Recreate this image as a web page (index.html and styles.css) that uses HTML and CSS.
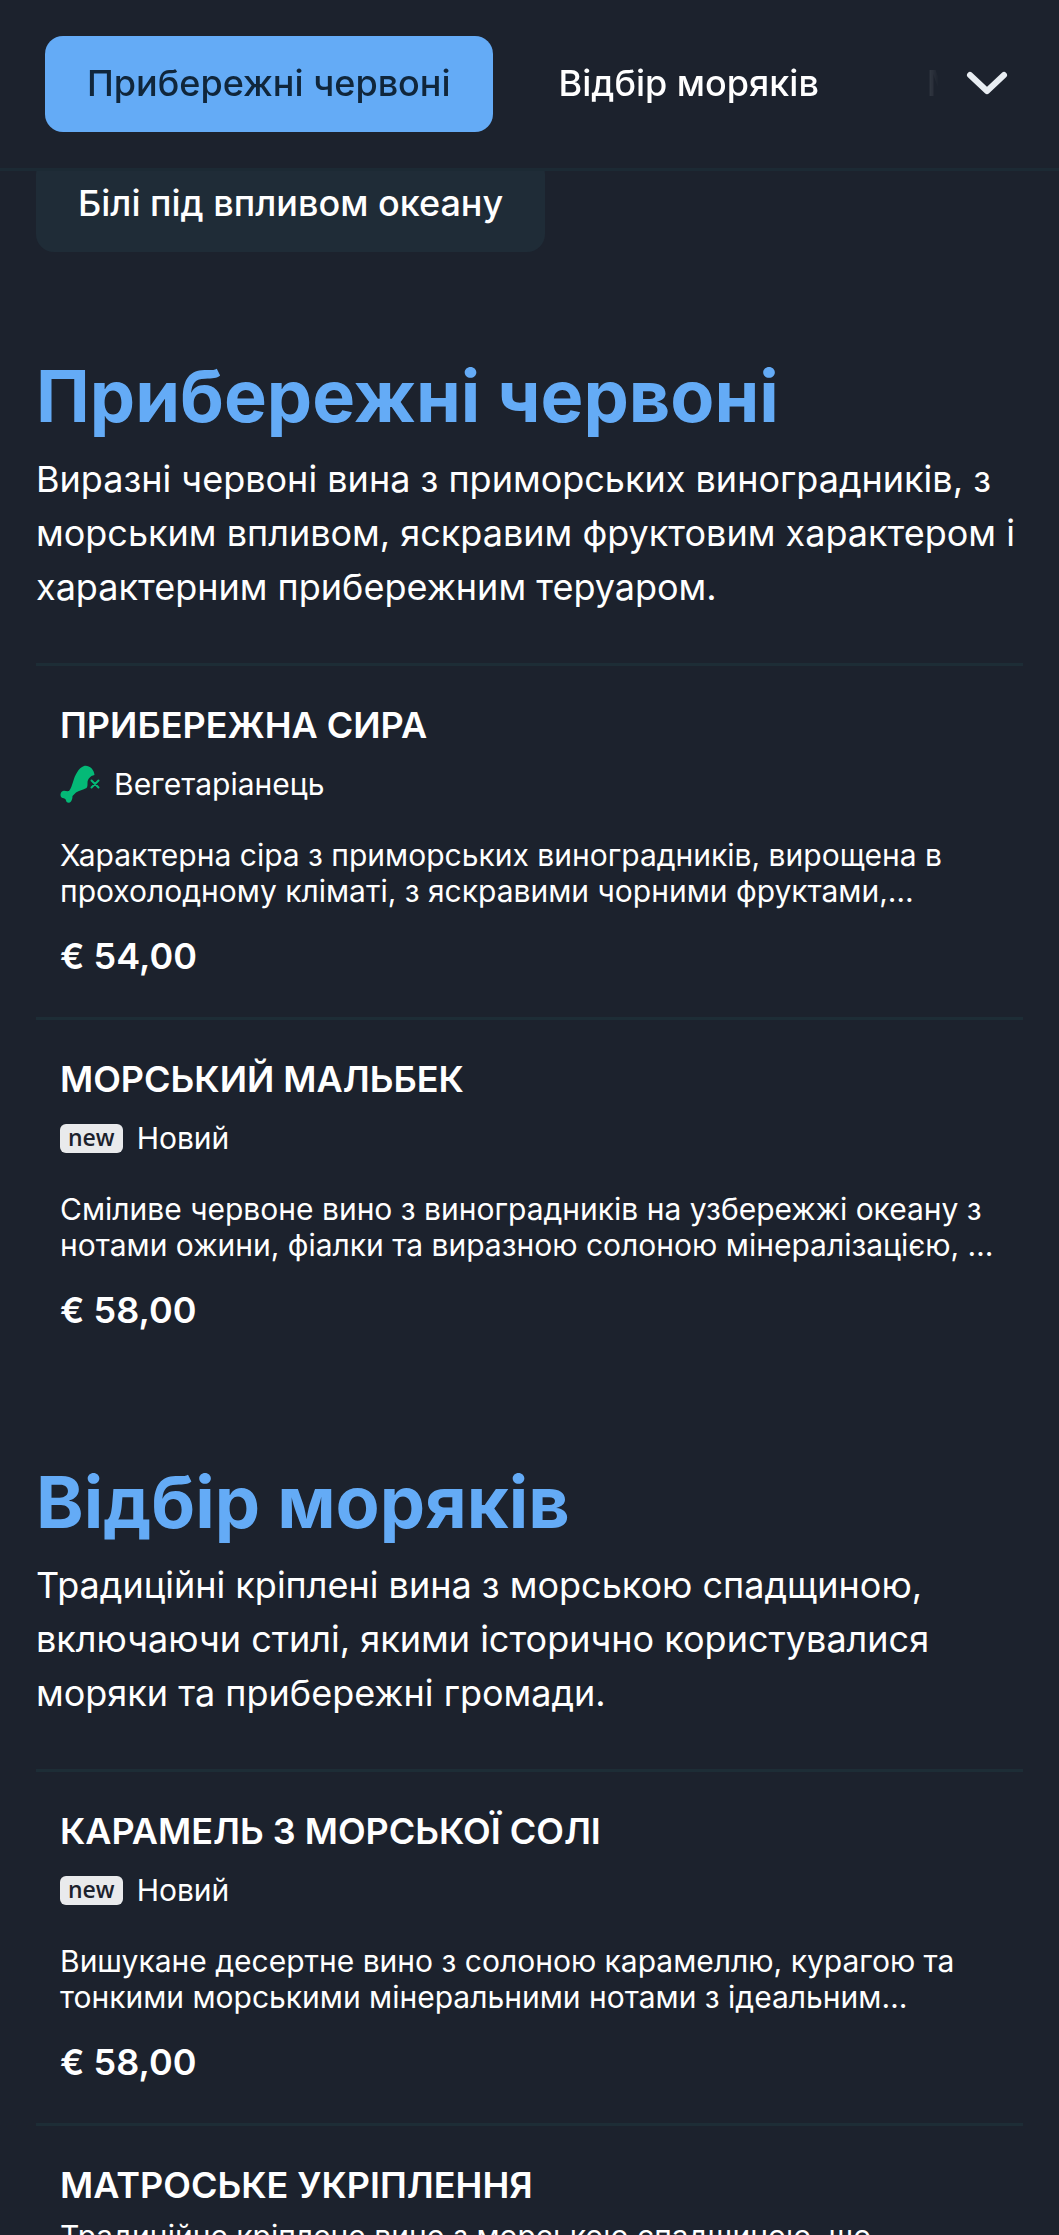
FILE: index.html
```html
<!DOCTYPE html>
<html lang="uk">
<head>
  <meta charset="UTF-8">
  <meta name="viewport" content="width=device-width, initial-scale=1.0">
  <title>Винна карта</title>
  <link rel="stylesheet" href="styles.css">
</head>
<body>

<header class="topbar">
  <nav class="tabs">
    <a href="#coastal" class="tab active">Прибережні червоні</a>
    <a href="#sailors" class="tab">Відбір моряків</a>
    <a href="#more" class="tab">М</a>
  </nav>
  <button class="toggle" type="button" aria-label="Усі категорії">
    <svg viewBox="0 0 44 28" width="44" height="28">
      <path d="M5 5 L22 21 L39 5" fill="none" stroke="currentColor" stroke-width="6" stroke-linecap="round" stroke-linejoin="round"/>
    </svg>
  </button>
</header>

<main>
  <div class="chips">
    <a href="#white" class="tab chip">Білі під впливом океану</a>
  </div>

  <!-- Прибережні червоні -->
  <section id="coastal">
    <h2>Прибережні червоні</h2>
    <p class="intro">Виразні червоні вина з приморських виноградників, з морським впливом, яскравим фруктовим характером і характерним прибережним теруаром.</p>

    <article class="item">
      <h3>Прибережна сира</h3>
      <div class="label">
        <svg viewBox="0 0 40 40" width="40" height="40">
          <path d="M24 2 C29 1 34 5 34.500 11 C30 12 27.500 15 27.500 19 C27.500 21 27.500 23 26.500 24 C23 26 19 26.500 16 28.500 L12.500 32 C12.500 34 12 36 11 37.500 C9.500 39.500 6.500 39 6 36.500 C5.500 34.500 4.500 34.500 2.500 34 C-.5 33 0 28 3 27 C5 26.500 7 27.500 9 27 C11 24.500 12 21 13 18 C15 11 18.500 4 24 2 Z" fill="#04b977"/>
          <path d="M31.500 16.500 L38.500 23.500 M38.500 16.500 L31.500 23.500" stroke="#04b977" stroke-width="2" stroke-linecap="round"/>
        </svg>
        <span>Вегетаріанець</span>
      </div>
      <p class="desc">Характерна сіра з приморських виноградників, вирощена в прохолодному кліматі, з яскравими чорними фруктами,…</p>
      <p class="price">€ 54,00</p>
    </article>

    <article class="item">
      <h3>Морський мальбек</h3>
      <div class="label">
        <span class="new">new</span>
        <span>Новий</span>
      </div>
      <p class="desc">Сміливе червоне вино з виноградників на узбережжі океану з нотами ожини, фіалки та виразною солоною мінералізацією, …</p>
      <p class="price">€ 58,00</p>
    </article>
  </section>

  <!-- Відбір моряків -->
  <section id="sailors">
    <h2>Відбір моряків</h2>
    <p class="intro">Традиційні кріплені вина з морською спадщиною, включаючи стилі, якими історично користувалися моряки та прибережні громади.</p>

    <article class="item">
      <h3>Карамель з морської солі</h3>
      <div class="label">
        <span class="new">new</span>
        <span>Новий</span>
      </div>
      <p class="desc">Вишукане десертне вино з солоною карамеллю, курагою та тонкими морськими мінеральними нотами з ідеальним…</p>
      <p class="price">€ 58,00</p>
    </article>

    <article class="item">
      <h3>Матроське укріплення</h3>
      <p class="desc">Традиційне кріплене вино з морською спадщиною, що</p>
    </article>
  </section>
</main>

</body>
</html>
```
FILE: styles.css
```css
* { box-sizing: border-box; }
body {
  font-family: Inter, "Liberation Sans", sans-serif;
  margin: 0;
  height: 100vh;
  overflow: hidden;
  background: #1c222d;
  color: #fff;
}
h2, h3, p { margin: 0; }
a { color: inherit; text-decoration: none; }

.topbar {
  position: fixed; top: 0; left: 0; right: 0; z-index: 10;
  display: flex; align-items: center;
  padding: 36px 50px 36px 45px;
  background: #1c222d;
  border-bottom: 3px solid #1c2a34;
}
.tabs {
  flex: 1; display: flex; gap: 24px;
  overflow: hidden;
  mask-image: linear-gradient(to right, #000 calc(100% - 100px), transparent);
}
.tab {
  flex: none;
  padding: 20px 42px 22px;
  border-radius: 18px;
  font-size: 36px; line-height: 54px; font-weight: 500;
  white-space: nowrap;
}
.tab.active { background: #64abf6; color: #10263b; }
.toggle {
  display: flex;
  margin-left: 26px; padding: 0;
  background: none; border: none;
  color: #e8edf2; cursor: pointer;
}

main { padding: 156px 36px 0; }
.chips { display: flex; margin-bottom: 13px; }
.chip { background: #1f2c37; }

section { padding-top: 91px; }
h2 {
  color: #64abf6;
  font-size: 72px; line-height: 80px; font-weight: 700;
  margin-bottom: 16px;
}
.intro {
  font-size: 36px; line-height: 54px;
  margin-bottom: 49px;
}

.item {
  padding: 32px 24px 34px;
  border-top: 3px solid #1d2d36;
}
.item h3 {
  font-size: 36px; line-height: 54px; font-weight: 600;
  text-transform: uppercase;
  margin-bottom: 6px;
}
.label {
  display: flex; align-items: center; gap: 14px;
  height: 36px;
  margin: 14px 0 35px;
  font-size: 30px; line-height: 36px;
}
.new {
  padding: 0 8px 3px;
  border-radius: 6px;
  background: #e9eaec; color: #1c222d;
  font-family: "Open Sans", sans-serif;
  font-size: 23px; line-height: 26px; font-weight: 600;
}
.desc { font-size: 30px; line-height: 36px; }
.price {
  font-size: 36px; line-height: 54px; font-weight: 600;
  margin-top: 20px;
}
```
